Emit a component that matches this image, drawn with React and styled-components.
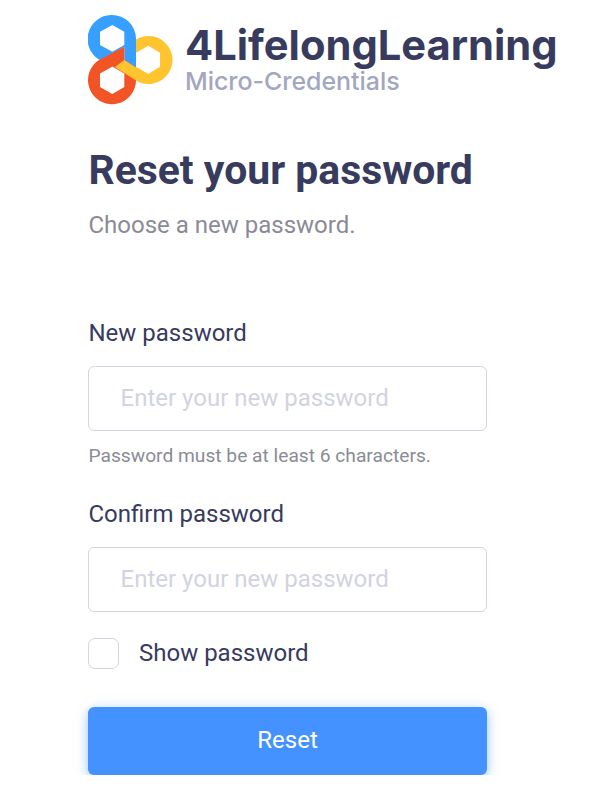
import React from 'react'
import styled, { createGlobalStyle } from 'styled-components'

const Global = createGlobalStyle`
  html, body {
    margin: 0;
    padding: 0;
    background: #fff;
  }
  body {
    font-family: Roboto, "Liberation Sans", sans-serif;
    color: #373b5e;
  }
`

const Page = styled.div`
  width: 399px;
  margin-left: 88px;
  padding-top: 15px;
`

const Brand = styled.div`
  display: flex;
  align-items: flex-start;
  gap: 12px;
  width: 490px;
`

const BrandText = styled.div`
  display: flex;
  flex-direction: column;
  padding-top: 8px;
`

const BrandName = styled.div`
  font-family: Inter, sans-serif;
  font-weight: 700;
  font-size: 41.7px;
  line-height: 45px;
  color: #373b5e;
  white-space: nowrap;
`

const BrandSub = styled.div`
  font-family: Inter, sans-serif;
  font-weight: 500;
  font-size: 24.9px;
  line-height: 26px;
  color: #a2a6c0;
  white-space: nowrap;
`

const Title = styled.h1`
  margin: 42px 0 0 0.5px;
  font-size: 40.9px;
  line-height: 46px;
  font-weight: 700;
  color: #373b5e;
  white-space: nowrap;
`

const Subtitle = styled.p`
  margin: 16px 0 0 0.5px;
  font-size: 24px;
  line-height: 32px;
  color: #8a8b96;
`

const Form = styled.form`
  display: flex;
  flex-direction: column;
  margin-top: 76px;
`

const Label = styled.label`
  margin-left: 0.5px;
  font-size: 24px;
  line-height: 32px;
  color: #373b5e;
`

const Input = styled.input`
  box-sizing: border-box;
  width: 399px;
  height: 65px;
  margin-top: 17px;
  padding: 0 32px 2px 31.5px;
  border: 1px solid #d4d4e2;
  border-radius: 6px;
  outline: none;
  background: #fff;
  font-family: inherit;
  font-size: 24px;
  &::placeholder {
    color: #d2d3e1;
    opacity: 1;
  }
`

const Hint = styled.div`
  margin: 14px 0 31px 0.5px;
  font-size: 19.2px;
  line-height: 22px;
  color: #8a8b96;
`

const CheckRow = styled.label`
  display: flex;
  align-items: center;
  gap: 20px;
  margin-top: 25px;
  font-size: 24px;
  line-height: 32px;
  color: #373b5e;
`

const CheckBox = styled.span`
  box-sizing: border-box;
  width: 31px;
  height: 31px;
  border: 1px solid #d4d4e2;
  border-radius: 7px;
  background: #fff;
`

const ResetButton = styled.button`
  width: 399px;
  height: 68px;
  margin-top: 38px;
  padding: 0 0 2px;
  border: 0;
  border-radius: 6px;
  background: #4392ff;
  box-shadow: 0 3px 12px rgba(67, 146, 255, 0.55);
  color: #fff;
  font-family: inherit;
  font-size: 24px;
`

const Logo = () => (
  <svg width="85" height="90" viewBox="0 0 85 90" style={{ flexShrink: 0 }}>
    <path
      fill="#369fff"
      fillRule="evenodd"
      d="M24 0A24 24 0 0 1 48 23.5V53L36.3 45.5V30L24.3 36.7L12 30V16.7L24.3 10L36.3 16.7V31.7L14 46A24 24 0 0 1 24 0Z"
    />
    <path
      fill="#f35425"
      d="M36.3 31.7V45L12 58.5V72L24.3 79L36.3 72V58.5L24.3 51.5L36.3 45L48 52.5V65.5A24 24 0 1 1 11 45Z"
    />
    <path
      fill="#ffc42e"
      fillRule="evenodd"
      d="M48 24.5A24 24 0 1 1 48 65.5L27 52L36.3 45L48 52.5V37.7L60.3 30.7L72 37.7V51.7L60.3 59L48 51.7V24.5Z"
    />
  </svg>
)

const App = () => (
  <Page>
    <Global />
    <Brand>
      <Logo />
      <BrandText>
        <BrandName>4LifelongLearning</BrandName>
        <BrandSub>Micro-Credentials</BrandSub>
      </BrandText>
    </Brand>
    <Title>Reset your password</Title>
    <Subtitle>Choose a new password.</Subtitle>
    <Form>
      <Label>New password</Label>
      <Input placeholder="Enter your new password" />
      <Hint>Password must be at least 6 characters.</Hint>
      <Label>Confirm password</Label>
      <Input placeholder="Enter your new password" />
      <CheckRow>
        <CheckBox />
        Show password
      </CheckRow>
      <ResetButton type="button">Reset</ResetButton>
    </Form>
  </Page>
)

export default App
